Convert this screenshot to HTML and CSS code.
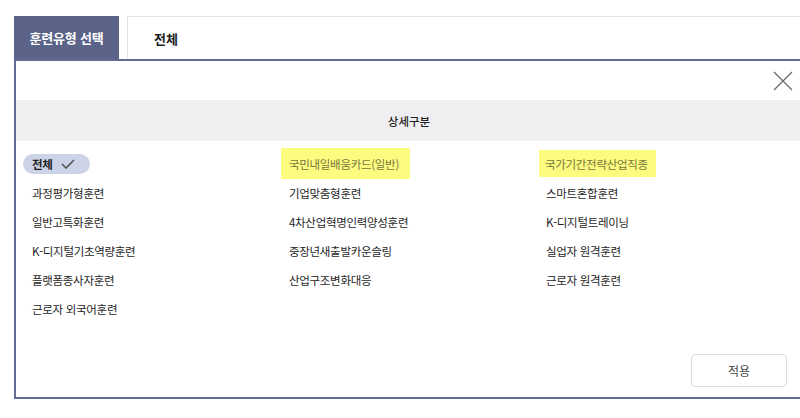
FILE: index.html
```html
<!DOCTYPE html>
<html lang="ko">
<head>
    <meta charset="UTF-8">
    <meta name="viewport" content="width=device-width, initial-scale=1.0">
    <title>훈련유형 선택</title>
    <link rel="stylesheet" href="styles.css">
</head>
<body>
    <div class="wrap">
        <div class="tabs">
            <div class="tab-title">훈련유형 선택</div>
            <div class="tab-value">전체</div>
        </div>
        <div class="panel">
            <div class="panel-head">
                <button class="close" aria-label="닫기">
                    <svg width="20" height="20" viewBox="0 0 20 20">
                        <path d="M1 1 L19 19 M19 1 L1 19"/>
                    </svg>
                </button>
            </div>
            <div class="section-title">상세구분</div>
            <div class="options">
                <span class="item selected">전체
                    <svg width="14" height="10" viewBox="0 0 14 10">
                        <path d="M1 5 L5 9 L13 1"/>
                    </svg>
                </span>
                <span class="item mark">국민내일배움카드(일반)</span>
                <span class="item mark mark-sm">국가기간전략산업직종</span>

                <span class="item">과정평가형훈련</span>
                <span class="item">기업맞춤형훈련</span>
                <span class="item">스마트혼합훈련</span>

                <span class="item">일반고특화훈련</span>
                <span class="item">4차산업혁명인력양성훈련</span>
                <span class="item">K-디지털트레이닝</span>

                <span class="item">K-디지털기초역량훈련</span>
                <span class="item">중장년새출발카운슬링</span>
                <span class="item">실업자 원격훈련</span>

                <span class="item">플랫폼종사자훈련</span>
                <span class="item">산업구조변화대응</span>
                <span class="item">근로자 원격훈련</span>

                <span class="item">근로자 외국어훈련</span>
            </div>
            <div class="actions">
                <button class="apply">적용</button>
            </div>
        </div>
    </div>
</body>
</html>
```

FILE: styles.css
```css
body {
    margin: 0;
    overflow: hidden;
    background: #fff;
    color: #1e1e1e;
    font-family: "Noto Sans CJK KR", "Noto Sans", sans-serif;
}
.wrap {
    margin: 16px 0 0 14px;
    width: 788px;
}
.tabs {
    display: flex;
    height: 43px;
}
.tab-title {
    width: 105px;
    display: flex;
    align-items: center;
    justify-content: center;
    background: #5c6389;
    color: #fff;
    font-size: 13px;
    font-weight: 700;
    letter-spacing: -0.2px;
}
.tab-value {
    flex: 1;
    margin-left: 8px;
    display: flex;
    align-items: center;
    padding-left: 26px;
    border: 1px solid #e2e2e2;
    border-bottom: none;
    font-size: 13px;
    font-weight: 700;
}
.panel {
    border: 2px solid #646b95;
    border-right: none;
}
.panel-head {
    height: 39px;
    display: flex;
    justify-content: flex-end;
    align-items: center;
    padding-right: 9px;
}
.close {
    background: none;
    border: none;
    padding: 0;
    width: 20px;
    height: 20px;
    cursor: pointer;
}
.close path {
    stroke: #666;
    stroke-width: 1.2;
    fill: none;
}
.section-title {
    height: 41px;
    display: flex;
    align-items: center;
    justify-content: center;
    background: #efeff2;
    font-size: 11.5px;
    font-weight: 500;
}
.options {
    display: grid;
    grid-template-columns: 257px 257px 257px;
    grid-auto-rows: 29px;
    align-items: center;
    justify-items: start;
    padding: 8px 0 0 7px;
}
.item {
    display: inline-flex;
    align-items: center;
    height: 20px;
    padding: 0 9px;
    font-size: 11.5px;
    letter-spacing: -0.3px;
    white-space: nowrap;
}
.item.selected {
    gap: 8px;
    padding-right: 15px;
    border-radius: 10px;
    background: #ccd3e6;
    font-weight: 700;
}
.item.selected path {
    fill: none;
    stroke: #555;
    stroke-width: 1.6;
}
.item.mark {
    height: 31px;
    margin: -6px 0 -6px 1px;
    padding: 0 11px 0 8px;
    background: #fcfc80;
    color: #7a763c;
}
.item.mark-sm {
    height: 27px;
    margin: -4px 0 -4px 2px;
    padding: 0 8px 0 6px;
}
.actions {
    display: flex;
    justify-content: flex-end;
    padding: 31px 15px 10px 0;
}
.apply {
    width: 96px;
    height: 33px;
    border: 1px solid #dcdcdc;
    border-radius: 4px;
    background: #fff;
    color: #444;
    font-family: inherit;
    font-size: 12px;
    cursor: pointer;
}
```
